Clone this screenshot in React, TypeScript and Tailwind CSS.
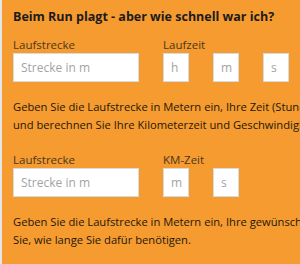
import React from "react";

const font = { fontFamily: '"Open Sans", "Noto Sans", sans-serif' };

function Field({ placeholder, w }: { placeholder: string; w: string }) {
  return (
    <input
      type="text"
      placeholder={placeholder}
      className={`${w} h-[29px] bg-white border border-[#d3dbe3] pl-[7px] pr-0 text-[12px] text-[#555] placeholder:text-[#a3a3a3] outline-none`}
      style={font}
    />
  );
}

function Row({ second, smalls }: { second: string; smalls: string[] }) {
  return (
    <div className="flex gap-[24px]">
      <div className="flex flex-col">
        <label className="text-[11.5px] leading-[16px] text-[#4a3720]">Laufstrecke</label>
        <Field placeholder="Strecke in m" w="w-[126px]" />
      </div>
      <div className="flex flex-col">
        <label className="text-[11.5px] leading-[16px] text-[#4a3720]">{second}</label>
        <div className="flex gap-[24px]">
          {smalls.map((s) => (
            <Field key={s} placeholder={s} w="w-[26px]" />
          ))}
        </div>
      </div>
    </div>
  );
}

export default function App() {
  return (
    <div className="w-[300px] h-[264px] overflow-hidden bg-[#f59b30] border-l-2 border-[#e4e6e8]" style={font}>
      <div className="w-[480px] pl-[11px] pt-[8px]">
        <h3 className="text-[12.5px] font-bold leading-[18px] text-[#1b1b1b] mb-[11px] whitespace-nowrap">
          Beim Run plagt - aber wie schnell war ich?
        </h3>
        <Row second="Laufzeit" smalls={["h", "m", "s"]} />
        <p className="text-[11.2px] leading-[18px] text-[#24180a] mt-[16px] whitespace-nowrap">
          Geben Sie die Laufstrecke in Metern ein, Ihre Zeit (Stunden, Minuten, Sekunden)
          <br />
          und berechnen Sie Ihre Kilometerzeit und Geschwindigkeit.
        </p>
        <div className="mt-[18px]">
          <Row second="KM-Zeit" smalls={["m", "s"]} />
        </div>
        <p className="text-[11.2px] leading-[18px] text-[#24180a] mt-[16px] whitespace-nowrap">
          Geben Sie die Laufstrecke in Metern ein, Ihre gewünschte KM-Zeit und erfahren
          <br />
          Sie, wie lange Sie dafür benötigen.
        </p>
      </div>
    </div>
  );
}
